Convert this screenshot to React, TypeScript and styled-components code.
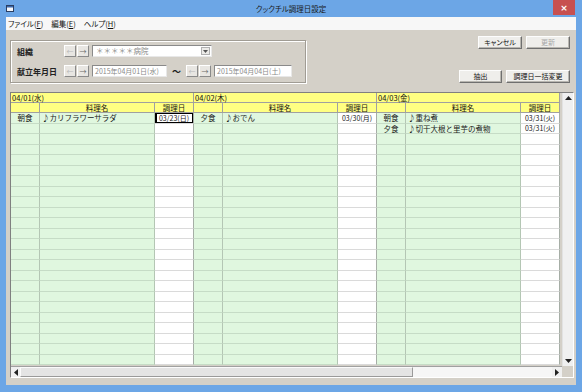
import React from "react";
import styled, { createGlobalStyle } from "styled-components";

const FONT = `"Noto Sans CJK JP", "Noto Sans", sans-serif`;

const GlobalStyle = createGlobalStyle`
  html, body { margin: 0; padding: 0; background: #ffffff; }
  body { font-family: ${FONT}; color: #000; }
  * { box-sizing: border-box; }
`;

const Window = styled.div`
  width: 582px;
  height: 392px;
  background: #6ca6e6;
  display: flex;
  flex-direction: column;
  padding: 0 6px 7px 6px;
  overflow: hidden;
  font-family: ${FONT};
`;

const TitleBar = styled.div`
  height: 17px;
  margin: 0 -6px;
  display: grid;
  grid-template-columns: 60px 1fr 60px;
  align-items: start;
`;

const AppIcon = styled.div`
  display: flex;
  padding: 5px 0 0 6px;
`;

const Title = styled.div`
  text-align: center;
  font-size: 7.5px;
  line-height: 17px;
  color: #1a1a1a;
  font-feature-settings: "palt";
`;

const CloseButton = styled.div`
  justify-self: end;
  margin-right: 7px;
  width: 22px;
  height: 15px;
  background: #c75050;
  color: #fff;
  font-size: 9px;
  font-family: "DejaVu Sans", sans-serif;
  display: flex;
  align-items: center;
  justify-content: center;
  font-weight: bold;
`;

const MenuBar = styled.div`
  height: 13px;
  background: #f7f7f7;
  display: flex;
  align-items: center;
  gap: 8px;
  padding-left: 2px;
`;

const MenuItem = styled.span`
  font-size: 7.5px;
  line-height: 13px;
  color: #111;
  font-feature-settings: "palt";
  u { text-decoration: underline; }
`;

const Body = styled.div`
  flex: 1;
  background: #d4d0c8;
  display: flex;
  flex-direction: column;
  padding: 0 2px 0 4px;
`;

const TopArea = styled.div`
  height: 62px;
  display: flex;
  justify-content: space-between;
`;

const GroupBox = styled.div`
  margin-top: 10px;
  width: 296px;
  height: 43px;
  border: 1px solid #a09c94;
  box-shadow: inset 1px 1px 0 #fff, 1px 1px 0 #fff;
  padding: 4px 0 0 6px;
  display: flex;
  flex-direction: column;
  gap: 8px;
`;

const FormRow = styled.div`
  height: 12px;
  display: flex;
  align-items: center;
`;

const FieldLabel = styled.span`
  width: 47px;
  font-size: 8px;
  font-weight: 700;
  color: #222;
`;

const ArrowButton = styled.div<{ $dim?: boolean }>`
  width: 12px;
  height: 12px;
  margin-right: 1px;
  background: #e8e6e2;
  border: 1px solid;
  border-color: #fff #8a8a8a #8a8a8a #fff;
  font-size: 7px;
  color: ${(p) => (p.$dim ? "#b8b8b8" : "#6a6a6a")};
  display: flex;
  align-items: center;
  justify-content: center;
  line-height: 1;
`;

const Combo = styled.div`
  margin-left: 2px;
  width: 120px;
  height: 12px;
  background: #fff;
  border: 1px solid;
  border-color: #8a8a8a #e8e8e8 #e8e8e8 #8a8a8a;
  display: flex;
  align-items: center;
  justify-content: space-between;
  padding: 0 1px 0 3px;
`;

const FieldText = styled.span<{ $size?: number }>`
  font-size: ${(p) => p.$size ?? 7}px;
  color: #8a8a8a;
  white-space: nowrap;
  line-height: 1;
`;

const DropButton = styled.div`
  width: 9px;
  height: 8px;
  background: #ecebe8;
  border: 1px solid #b0b0b0;
  display: flex;
  align-items: center;
  justify-content: center;
`;

const DateBox = styled.div<{ $w: number }>`
  margin-left: 2px;
  width: ${(p) => p.$w}px;
  height: 12px;
  background: #fff;
  border: 1px solid;
  border-color: #8a8a8a #e8e8e8 #e8e8e8 #8a8a8a;
  display: flex;
  align-items: center;
  padding-left: 2px;
  overflow: hidden;
`;

const Tilde = styled.span`
  width: 19px;
  text-align: center;
  font-size: 9px;
  font-weight: 700;
  color: #222;
`;

const ButtonColumn = styled.div`
  margin-top: 6px;
  margin-right: 4px;
  display: flex;
  flex-direction: column;
  align-items: flex-end;
  gap: 21px;
`;

const ButtonRow = styled.div`
  display: flex;
  gap: 4px;
`;

const Button = styled.div<{ $w: number; $disabled?: boolean }>`
  width: ${(p) => p.$w}px;
  height: 13px;
  background: #efeeeb;
  border: 1px solid;
  border-color: #fdfdfd #6f6f6f #6f6f6f #fdfdfd;
  box-shadow: inset -1px -1px 0 #b8b6b0;
  font-size: 7px;
  color: ${(p) => (p.$disabled ? "#a8a8a8" : "#111")};
  display: flex;
  align-items: center;
  justify-content: center;
  line-height: 1;
  font-feature-settings: "palt";
`;

const GridFrame = styled.div`
  width: 564px;
  height: 286px;
  border: 1px solid;
  border-color: #808080 #ffffff #ffffff #808080;
  display: flex;
  flex-direction: column;
  background: #d4d0c8;
`;

const GridMain = styled.div`
  height: 273px;
  display: flex;
`;

const Viewport = styled.div`
  width: 551px;
  overflow: hidden;
  background: #d4d0c8;
  display: flex;
  flex-direction: column;
`;

const DayHeaderRow = styled.div`
  height: 10px;
  display: grid;
  grid-template-columns: repeat(3, 183px);
  flex: none;
`;

const DayHeaderCell = styled.div`
  background: #ffff82;
  border-right: 1px solid #a0a0a0;
  border-bottom: 1px solid #a0a0a0;
  font-size: 7.5px;
  line-height: 9px;
  padding-left: 1px;
  color: #111;
  white-space: nowrap;
`;

const ColumnRow = styled.div<{ $h: number }>`
  height: ${(p) => p.$h}px;
  display: grid;
  grid-template-columns: repeat(3, 29px 115px 39px);
  flex: none;
`;

const HeadCell = styled.div`
  background: #ffff82;
  border-right: 1px solid #a0a0a0;
  border-bottom: 1px solid #a0a0a0;
  font-size: 7.5px;
  line-height: 9px;
  text-align: center;
  color: #111;
`;

type Kind = "meal" | "dish" | "date";

const Cell = styled.div<{ $kind: Kind; $focused?: boolean }>`
  background: ${(p) => (p.$kind === "date" ? "#ffffff" : "#e0f7df")};
  border-right: 1px solid ${(p) => (p.$kind === "date" ? "#a6aea6" : "#b4c6b4")};
  border-bottom: 1px solid ${(p) => (p.$kind === "date" ? "#dadada" : "#c6dcc6")};
  font-size: ${(p) => (p.$kind === "date" ? 7 : 7.5)}px;
  line-height: 1;
  display: flex;
  align-items: center;
  justify-content: ${(p) => (p.$kind === "dish" ? "flex-start" : "center")};
  padding-left: ${(p) => (p.$kind === "dish" ? "2px" : "0")};
  color: #1a1a1a;
  white-space: nowrap;
  overflow: hidden;
  box-shadow: ${(p) => (p.$focused ? "inset 0 0 0 1px #000, inset 1px 0 0 1px #000" : "none")};
`;

const VScroll = styled.div`
  width: 11px;
  background: #f0f0f0;
  border-left: 1px solid #e2e2e2;
  display: flex;
  flex-direction: column;
  justify-content: space-between;
`;

const ScrollButton = styled.div<{ $w?: number; $h?: number }>`
  width: ${(p) => p.$w ?? 10}px;
  height: ${(p) => p.$h ?? 10}px;
  background: #f0f0f0;
  display: flex;
  align-items: center;
  justify-content: center;
  flex: none;
`;

const HScrollRow = styled.div`
  height: 11px;
  display: flex;
`;

const HScroll = styled.div`
  width: 551px;
  display: flex;
  background: #f4f4f4;
  border-top: 1px solid #a0a0a0;
`;

const Thumb = styled.div`
  width: 393px;
  background: #e4e4e4;
  border: 1px solid;
  border-color: #fbfbfb #9a9a9a #9a9a9a #fbfbfb;
`;

const Track = styled.div`
  flex: 1;
  background: #f6f6f6;
`;

const Corner = styled.div`
  flex: 1;
  background: #d4d0c8;
`;

type Entry = { meal: string; dish: string; date: string; focused?: boolean };
type Day = { label: string; entries: Entry[] };

const days: Day[] = [
  { label: "04/01(水)", entries: [{ meal: "朝食", dish: "♪カリフラワーサラダ", date: "03/23(日)", focused: true }] },
  { label: "04/02(木)", entries: [{ meal: "夕食", dish: "♪おでん", date: "03/30(月)" }] },
  {
    label: "04/03(金)",
    entries: [
      { meal: "朝食", dish: "♪重ね煮", date: "03/31(火)" },
      { meal: "夕食", dish: "♪切干大根と里芋の煮物", date: "03/31(火)" },
    ],
  },
];

const ROWS = 24;

const Tri = ({ dir }: { dir: "up" | "down" | "left" | "right" }) => {
  const pts = {
    up: "0,4 3.5,0 7,4",
    down: "0,0 3.5,4 7,0",
    left: "4,0 0,3.5 4,7",
    right: "0,0 4,3.5 0,7",
  }[dir];
  const horiz = dir === "left" || dir === "right";
  return (
    <svg width={horiz ? 4 : 7} height={horiz ? 7 : 4} viewBox={horiz ? "0 0 4 7" : "0 0 7 4"}>
      <polygon points={pts} fill="#222" />
    </svg>
  );
};

export default function App() {
  return (
    <>
      <GlobalStyle />
      <Window>
        <TitleBar>
          <AppIcon>
            <svg width="8" height="7" viewBox="0 0 8 7">
              <rect x="0.5" y="0.5" width="7" height="6" fill="#f4f6fa" stroke="#2a3e62" strokeWidth="1" />
              <rect x="1" y="1" width="6" height="1.5" fill="#3a66a8" />
            </svg>
          </AppIcon>
          <Title>クックチル調理日設定</Title>
          <CloseButton>×</CloseButton>
        </TitleBar>
        <MenuBar>
          <MenuItem>ファイル(<u>F</u>)</MenuItem>
          <MenuItem>編集(<u>E</u>)</MenuItem>
          <MenuItem>ヘルプ(<u>H</u>)</MenuItem>
        </MenuBar>
        <Body>
          <TopArea>
            <GroupBox>
              <FormRow>
                <FieldLabel>組織</FieldLabel>
                <ArrowButton $dim>←</ArrowButton>
                <ArrowButton>→</ArrowButton>
                <Combo>
                  <FieldText $size={7.5}>＊＊＊＊＊病院</FieldText>
                  <DropButton>
                    <svg width="5" height="3" viewBox="0 0 5 3">
                      <polygon points="0,0 2.5,3 5,0" fill="#555" />
                    </svg>
                  </DropButton>
                </Combo>
              </FormRow>
              <FormRow>
                <FieldLabel>献立年月日</FieldLabel>
                <ArrowButton $dim>←</ArrowButton>
                <ArrowButton>→</ArrowButton>
                <DateBox $w={75}>
                  <FieldText>2015年04月01日(水)</FieldText>
                </DateBox>
                <Tilde>〜</Tilde>
                <ArrowButton $dim>←</ArrowButton>
                <ArrowButton>→</ArrowButton>
                <DateBox $w={78}>
                  <FieldText>2015年04月04日(土)</FieldText>
                </DateBox>
              </FormRow>
            </GroupBox>
            <ButtonColumn>
              <ButtonRow>
                <Button $w={44}>キャンセル</Button>
                <Button $w={44} $disabled>
                  更新
                </Button>
              </ButtonRow>
              <ButtonRow>
                <Button $w={43}>抽出</Button>
                <Button $w={64}>調理日一括変更</Button>
              </ButtonRow>
            </ButtonColumn>
          </TopArea>
          <GridFrame>
            <GridMain>
              <Viewport>
                <DayHeaderRow>
                  {days.map((d) => (
                    <DayHeaderCell key={d.label}>{d.label}</DayHeaderCell>
                  ))}
                </DayHeaderRow>
                <ColumnRow $h={10}>
                  {days.map((d) => (
                    <React.Fragment key={d.label}>
                      <HeadCell />
                      <HeadCell>料理名</HeadCell>
                      <HeadCell>調理日</HeadCell>
                    </React.Fragment>
                  ))}
                </ColumnRow>
                {Array.from({ length: ROWS }, (_, i) => (
                  <ColumnRow key={i} $h={i % 2 === 0 ? 11 : 10}>
                    {days.map((d) => {
                      const e = d.entries[i];
                      return (
                        <React.Fragment key={d.label}>
                          <Cell $kind="meal">{e?.meal}</Cell>
                          <Cell $kind="dish">{e?.dish}</Cell>
                          <Cell $kind="date" $focused={e?.focused}>
                            {e?.date}
                          </Cell>
                        </React.Fragment>
                      );
                    })}
                  </ColumnRow>
                ))}
              </Viewport>
              <VScroll>
                <ScrollButton>
                  <Tri dir="up" />
                </ScrollButton>
                <ScrollButton>
                  <Tri dir="down" />
                </ScrollButton>
              </VScroll>
            </GridMain>
            <HScrollRow>
              <HScroll>
                <ScrollButton $w={9}>
                  <Tri dir="left" />
                </ScrollButton>
                <Thumb />
                <Track />
                <ScrollButton $w={10}>
                  <Tri dir="right" />
                </ScrollButton>
              </HScroll>
              <Corner />
            </HScrollRow>
          </GridFrame>
        </Body>
      </Window>
    </>
  );
}
